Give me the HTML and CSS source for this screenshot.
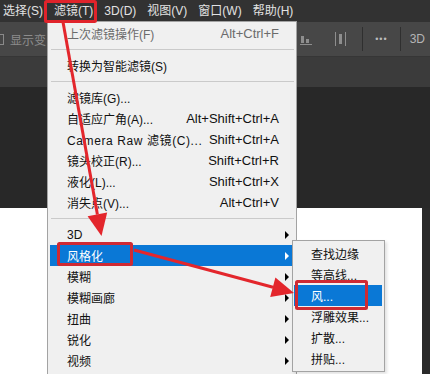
FILE: index.html
```html
<!DOCTYPE html>
<html lang="zh-CN">
<head>
    <meta charset="UTF-8">
    <title>滤镜 - 风格化 - 风</title>
    <link rel="stylesheet" href="styles.css">
</head>
<body>
    <div class="screen">
        <div class="menubar">
            <span class="mb-item">选择(S)</span>
            <span class="mb-item">滤镜(T)</span>
            <span class="mb-item">3D(D)</span>
            <span class="mb-item">视图(V)</span>
            <span class="mb-item">窗口(W)</span>
            <span class="mb-item">帮助(H)</span>
        </div>

        <div class="options">
            <div class="opt-left">
                <span class="chk"></span>
                <span class="opt-label">显示变</span>
            </div>
            <div class="opt-right">
                <svg class="ic ic-dist" width="12" height="12" viewBox="0 0 12 12">
                    <rect x="1" y="3" width="3" height="7" fill="#8e8e8e"/>
                    <rect x="6" y="6" width="3" height="4" fill="#8e8e8e"/>
                    <rect x="0" y="11" width="12" height="1" fill="#8e8e8e"/>
                </svg>
                <svg class="ic ic-align" width="11" height="14" viewBox="0 0 11 14">
                    <rect x="0" y="0" width="1" height="14" fill="#8e8e8e"/>
                    <rect x="4" y="2" width="3" height="10" fill="#8e8e8e"/>
                    <rect x="10" y="0" width="1" height="14" fill="#8e8e8e"/>
                </svg>
                <span class="vsep"></span>
                <span class="dots">•••</span>
                <span class="vsep"></span>
                <span class="td">3D</span>
            </div>
        </div>

        <div class="tabs"></div>
        <div class="work"></div>
        <div class="canvas-row">
            <div class="canvas"></div>
            <div class="edge"></div>
        </div>

        <!-- 滤镜 下拉菜单 -->
        <div class="menu main-menu">
            <div class="row disabled"><span>上次滤镜操作(F)</span><span class="key">Alt+Ctrl+F</span><span></span></div>
            <div class="sep"></div>
            <div class="row"><span>转换为智能滤镜(S)</span><span></span><span></span></div>
            <div class="sep"></div>
            <div class="row"><span>滤镜库(G)...</span><span></span><span></span></div>
            <div class="row"><span>自适应广角(A)...</span><span class="key">Alt+Shift+Ctrl+A</span><span></span></div>
            <div class="row"><span class="latin">Camera Raw 滤镜(C)...</span><span class="key">Shift+Ctrl+A</span><span></span></div>
            <div class="row"><span>镜头校正(R)...</span><span class="key">Shift+Ctrl+R</span><span></span></div>
            <div class="row"><span>液化(L)...</span><span class="key">Shift+Ctrl+X</span><span></span></div>
            <div class="row"><span>消失点(V)...</span><span class="key">Alt+Ctrl+V</span><span></span></div>
            <div class="sep"></div>
            <div class="row"><span>3D</span><span></span><span class="arrow"></span></div>
            <div class="row active"><span>风格化</span><span></span><span class="arrow"></span></div>
            <div class="row"><span>模糊</span><span></span><span class="arrow"></span></div>
            <div class="row"><span>模糊画廊</span><span></span><span class="arrow"></span></div>
            <div class="row"><span>扭曲</span><span></span><span class="arrow"></span></div>
            <div class="row"><span>锐化</span><span></span><span class="arrow"></span></div>
            <div class="row"><span>视频</span><span></span><span class="arrow"></span></div>
        </div>

        <!-- 风格化 子菜单 -->
        <div class="menu sub-menu">
            <div class="row"><span>查找边缘</span></div>
            <div class="row"><span>等高线...</span></div>
            <div class="row active"><span>风...</span></div>
            <div class="row"><span>浮雕效果...</span></div>
            <div class="row"><span>扩散...</span></div>
            <div class="row"><span>拼贴...</span></div>
        </div>

        <!-- 红色标注 -->
        <svg class="marks" width="430" height="374" viewBox="0 0 430 374">
            <rect x="45.5" y="1.5" width="50" height="20" rx="1" fill="none" stroke="#e0232b" stroke-width="3"/>
            <rect x="58.5" y="243.5" width="73" height="21" rx="1" fill="none" stroke="#cf2a33" stroke-width="3"/>
            <rect x="296.5" y="281.5" width="70" height="27" rx="1" fill="none" stroke="#cf2a33" stroke-width="3"/>

            <line x1="63" y1="22" x2="97.4" y2="214.4" stroke="#e3262c" stroke-width="3"/>
            <polygon points="107.2,212.5 87.6,216.3 101.5,236" fill="#e3262c"/>

            <line x1="134" y1="250" x2="273" y2="287.3" stroke="#e3262c" stroke-width="3"/>
            <polygon points="275.4,277.6 270.2,297 294,293" fill="#e3262c"/>
        </svg>
    </div>
</body>
</html>
```

FILE: styles.css
```css
:root {
    --menu-bg: #f0f0f0;
    --hl: #0a78d6;
    --ps-dark: #282828;
}

* {
    box-sizing: border-box;
    margin: 0;
    padding: 0;
}

body {
    background: var(--ps-dark);
    font-family: "Liberation Sans", "Noto Sans CJK SC", sans-serif;
}

.screen {
    position: relative;
    width: 430px;
    height: 374px;
    overflow: hidden;
    background: var(--ps-dark);
}

/* 顶部菜单栏 */
.menubar {
    height: 22px;
    background: #323232;
    display: flex;
    align-items: center;
    padding-left: 3px;
    gap: 11px;
    font-size: 12px;
    color: #e2e2e2;
}

.mb-item {
    line-height: 22px;
}

/* 选项栏 */
.options {
    height: 35px;
    background: #474747;
    display: flex;
    align-items: center;
    border-bottom: 1px solid #363636;
}

.opt-left {
    display: flex;
    align-items: center;
    gap: 6px;
}

.chk {
    width: 10px;
    height: 11px;
    margin-left: -6px;
    border: 1px solid #8a8a8a;
}

.opt-label {
    font-size: 12px;
    color: #8c8c8c;
}

.opt-right {
    margin-left: auto;
    padding-right: 5px;
    display: flex;
    align-items: center;
}

.ic-dist {
    margin-right: 23px;
}

.ic-align {
    margin-right: 16px;
}

.vsep {
    width: 1px;
    height: 24px;
    background: #2f2f2f;
}

.dots {
    margin: 0 12px;
    font-size: 9px;
    letter-spacing: 1px;
    color: #bdbdbd;
}

.td {
    margin-left: 9px;
    font-size: 12px;
    color: #b5b5b5;
}

.tabs {
    height: 30px;
    background: #3b3b3b;
}

.work {
    height: 121px;
    background: var(--ps-dark);
}

.canvas-row {
    display: flex;
    height: 166px;
}

.canvas {
    flex: 1;
    background: #ffffff;
}

.edge {
    width: 8px;
    background: #2a2a2a;
}

/* 下拉菜单 */
.menu {
    position: absolute;
    background: var(--menu-bg);
    border: 1px solid #a3a3a3;
    font-size: 12px;
    color: #111;
}

.main-menu {
    left: 47px;
    top: 21px;
    width: 250px;
    height: 380px;
    padding: 1px 2px 2px 2px;
}

.main-menu .row {
    display: grid;
    grid-template-columns: 1fr auto 15px;
    align-items: center;
    height: 21px;
    padding-left: 17px;
}

.row.disabled {
    color: #6b6b6b;
}

.key {
    font-size: 13px;
}

.latin {
    letter-spacing: 0.6px;
}

.sep {
    height: 1px;
    margin: 5px 0 5px 1px;
    background: #cacaca;
}

.arrow {
    justify-self: center;
    width: 0;
    height: 0;
    border-top: 4px solid transparent;
    border-bottom: 4px solid transparent;
    border-left: 4px solid #000;
}

.row.active {
    background: var(--hl);
    color: #fff;
}

.row.active .arrow {
    border-left-color: #fff;
}

.sub-menu {
    left: 292px;
    top: 240px;
    width: 93px;
    padding: 2px 2px 2px 1px;
    box-shadow: 2px 2px 3px rgba(0, 0, 0, 0.12);
}

.sub-menu .row {
    display: flex;
    align-items: center;
    height: 21px;
    padding-left: 17px;
}

/* 标注层 */
.marks {
    position: absolute;
    left: 0;
    top: 0;
    pointer-events: none;
}
```
